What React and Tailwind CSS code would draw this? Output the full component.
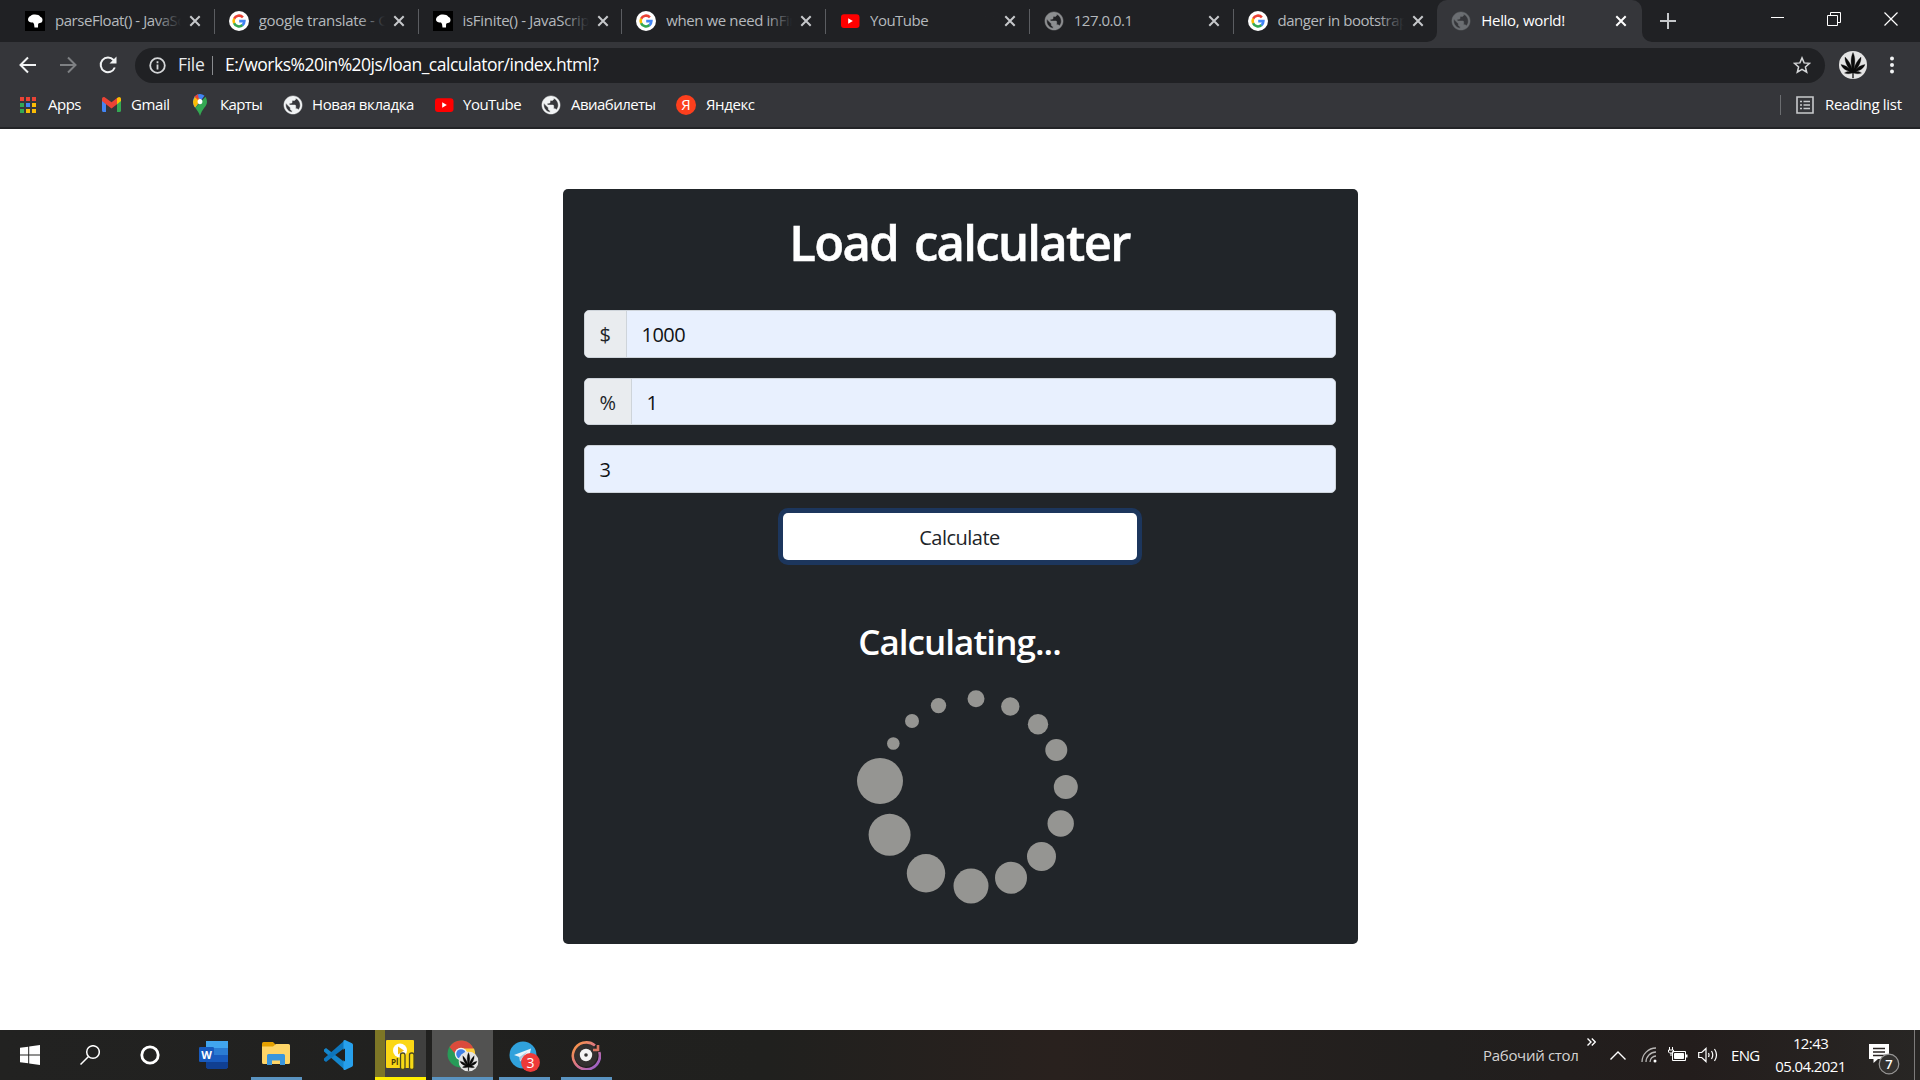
import React from "react";

const GoogleG = ({ s = 20 }) => (
  <svg width={s} height={s} viewBox="0 0 20 20">
    <circle cx="10" cy="10" r="10" fill="#fff" />
    <g fill="none" strokeWidth="2.6">
      <path d="M13.9 6.3A5.4 5.4 0 0 0 5.1 7.8" stroke="#ea4335" />
      <path d="M5.2 7.6a5.4 5.4 0 0 0 0 4.8" stroke="#fbbc05" />
      <path d="M5.1 12.2a5.4 5.4 0 0 0 8.5 1.9" stroke="#34a853" />
      <path d="M10.2 10.1h5.2a5.4 5.4 0 0 1-1.9 4.1" stroke="#4285f4" />
    </g>
  </svg>
);
const Hood = () => (
  <svg width="20" height="20" viewBox="0 0 20 20">
    <rect width="20" height="20" fill="#000" />
    <path d="M3 8.600C3 7 4 5.500 5.500 5 6.500 3.800 8 3.500 10 3.500c2.500 0 4.500.8 5.300 2.200 1.400.5 2.200 1.600 2.200 3.200 0 1.800-1 2.900-2.800 3.100-1 .2-1.700.6-1.600 1.600L13 16.500H9.500L9 13 8 11.500C7 11.300 5.500 11.600 4.700 11 3.600 10.600 3 9.700 3 8.600z" fill="#fff" />
  </svg>
);
const YT = () => (
  <svg width="20" height="20" viewBox="0 0 20 20">
    <rect x="1" y="3.200" width="18.500" height="13.800" rx="3" fill="#f00" />
    <path d="M8.200 7.300l4.600 2.700-4.600 2.700z" fill="#fff" />
  </svg>
);
const Globe = ({ c }) => (
  <svg width="20" height="20" viewBox="1 1 22 22">
    <path fill={c} stroke={c} strokeWidth=".5" d="M12 2C6.480 2 2 6.480 2 12s4.480 10 10 10 10-4.480 10-10S17.520 2 12 2zm-1 17.930c-3.950-.49-7-3.850-7-7.930 0-.62.08-1.210.21-1.790L9 15v1c0 1.100.9 2 2 2v1.930zm6.900-2.540c-.26-.81-1-1.390-1.900-1.390h-1v-3c0-.55-.45-1-1-1H8v-2h2c.55 0 1-.45 1-1V7h2c1.100 0 2-.9 2-2v-.41c2.930 1.190 5 4.060 5 7.410 0 2.080-.8 3.970-2.100 5.390z" />
  </svg>
);
const X = ({ c = "#c6c8cb" }) => (
  <svg width="12" height="12" viewBox="0 0 12 12" className="shrink-0">
    <path d="M1.300 1.300l9.400 9.400M10.700 1.300l-9.400 9.400" stroke={c} strokeWidth="2" />
  </svg>
);
const Leaf = ({ s }) => (
  <svg width={s} height={s} viewBox="0 0 28 28">
    <circle cx="14" cy="14" r="14" fill="#e4e4e4" />
    <path d="M14 1.500c2.500 5 2.200 11 .8 16.500 1.400-5 4-9 7.200-12 .3 5-2.500 10-5.500 13 2.500-3 5.500-5 9.500-5.500-1.500 4-5 6-9 7 2-.3 4 .2 5.500 1.500-2.500 1.200-5.500.8-8 .1v5h-1v-5c-2.500.7-5.500 1.100-8-.1 1.500-1.300 3.500-1.800 5.500-1.500-4-1-7.500-3-9-7 4 .5 7 2.500 9.500 5.500-3-3-5.800-8-5.500-13 3.200 3 5.800 7 7.200 12-1.400-5.500-1.700-11.500.8-16.500z" fill="#0a0a0a" stroke="#0a0a0a" strokeWidth=".3" />
  </svg>
);

const tabs = [
  [<Hood />, "parseFloat() - JavaScript", "tracking-[-0.45px]"],
  [<GoogleG />, "google translate - Google", "tracking-[-0.3px]"],
  [<Hood />, "isFinite() - JavaScript", "tracking-[-0.3px]"],
  [<GoogleG />, "when we need inFinite", "tracking-[-0.4px]"],
  [<YT />, "YouTube", "tracking-[-0.5px]"],
  [<Globe c="#8d8f91" />, "127.0.0.1", "tracking-[-0.5px]"],
  [<GoogleG />, "danger in bootstrap", "tracking-[-0.45px]"],
];

function Tabs() {
  return (
    <div className="flex h-[42px] bg-[#202124] pl-[11px]">
      {tabs.map(([icon, t, tr], i) => (
        <div key={i} className="flex w-[203.75px] shrink-0 items-center pl-[14px]">
          {icon}
          <div className="relative ml-[10px] h-[24px] w-[126px] overflow-hidden whitespace-nowrap">
            <span className={"block text-[15px] leading-[22px] text-[#b5b9bd] " + tr}>{t}</span>
            <span className="absolute inset-y-0 right-0 w-[26px] bg-gradient-to-r from-transparent to-[#202124]" />
          </div>
          <div className="ml-[8px] flex"><X /></div>
          {i < 6 && <div className="ml-auto h-[25px] w-px bg-[#5b5d61]" />}
        </div>
      ))}
      <div className="relative flex w-[205px] shrink-0 items-center rounded-t-[10px] bg-[#35363a] pl-[14px]">
        <svg className="absolute bottom-0 -left-[10px]" width="10" height="10"><path d="M10 0v10H0A10 10 0 0 0 10 0" fill="#35363a" /></svg>
        <svg className="absolute bottom-0 -right-[10px]" width="10" height="10"><path d="M0 0v10h10A10 10 0 0 1 0 0" fill="#35363a" /></svg>
        <Globe c="#6b6e72" />
        <span className="mb-[2px] ml-[10px] w-[126px] text-[15px] tracking-[-0.3px] text-white">Hello, world!</span>
        <div className="ml-[8px] flex"><X c="#fff" /></div>
      </div>
      <svg width="16" height="16" className="mt-[13px] ml-[18px]"><path d="M8 0v16M0 8h16" stroke="#c6c8cb" strokeWidth="2" /></svg>
      <div className="mt-[12px] mr-[22px] ml-auto flex gap-[43px]">
        <svg width="14" height="14"><path d="M1 5.500h13" stroke="#fff" /></svg>
        <svg width="14" height="14" fill="none" stroke="#fff"><path d="M.5 3.500h10v10H.5zM3.500 3.500V.5h10v10h-3" /></svg>
        <svg width="14" height="14"><path d="M.5.500l13 13M13.500.500l-13 13" stroke="#fff" strokeWidth="1.200" /></svg>
      </div>
    </div>
  );
}

function AddressBar() {
  return (
    <div className="flex h-[46px] items-center bg-[#35363a] pl-[19px]">
      <svg width="18" height="18" fill="none" stroke="#f1f3f4" strokeWidth="2"><path d="M17 9H2M9 1.500L1.500 9 9 16.500" /></svg>
      <svg width="18" height="18" className="ml-[22px]" fill="none" stroke="#7e8083" strokeWidth="2"><path d="M1 9h15M9 1.500L16.500 9 9 16.500" /></svg>
      <svg width="20" height="20" className="ml-[21px]" fill="none" stroke="#f1f3f4" strokeWidth="2"><path d="M16.800 12.500A7.300 7.300 0 1 1 15.500 5L17.500 7.500" /><path d="M18.500 1.500v7h-7z" fill="#f1f3f4" stroke="none" /></svg>
      <div className="ml-[17px] flex h-[35px] w-[1690px] items-center rounded-full bg-[#202124] pl-[14px]">
        <svg width="17" height="17" fill="none" stroke="#d4d6d8" strokeWidth="1.800"><circle cx="8.500" cy="8.500" r="7.300" /><path d="M8.500 7.500v5M8.500 4.300v1.900" /></svg>
        <span className="mb-[1px] ml-[12px] w-[26px] text-[17.500px] tracking-[-0.3px] text-[#e8eaed]">File</span>
        <span className="ml-[8px] h-[19px] w-px bg-[#8a8c8f]" />
        <span className="mb-[1px] ml-[12px] text-[17.500px] tracking-[-0.5px] whitespace-nowrap text-white">E:/works%20in%20js/loan_calculator/index.html?</span>
        <svg width="18" height="18" viewBox="0 0 18 18" className="mr-[14px] ml-auto"><path d="M9 1.900l2.100 5 5.400.4-4.100 3.600 1.300 5.300L9 13.400l-4.700 2.800 1.300-5.300L1.500 7.300l5.400-.4z" fill="none" stroke="#d4d6d8" strokeWidth="1.500" /></svg>
      </div>
      <div className="ml-[14px]"><Leaf s={28} /></div>
      <svg width="6" height="18" className="ml-[22px]" fill="#f1f3f4"><circle cx="3" cy="2.500" r="2" /><circle cx="3" cy="9" r="2" /><circle cx="3" cy="15.500" r="2" /></svg>
    </div>
  );
}

const apps = ["#ea4335", "#ea4335", "#ea4335", "#34a853", "#4285f4", "#fbbc05", "#34a853", "#fbbc05", "#fbbc05"];
const label = "text-[15px] text-white whitespace-nowrap ";
function Bookmarks() {
  return (
    <div className="flex h-[41px] items-center border-b-2 border-[#232427] bg-[#35363a] pb-[6px] pl-[20px]">
      <div className="grid grid-cols-3 gap-x-[2px] gap-y-[2px]">
        {apps.map((c, i) => <span key={i} className="h-[4px] w-[4px]" style={{ background: c }} />)}
      </div>
      <span className={label + "ml-[12px] w-[54px] tracking-[-0.5px]"}>Apps</span>
      <svg width="19" height="15" viewBox="0 0 19 15"><path d="M0 2v11.500c0 .8.500 1.500 1.500 1.500H4V5z" fill="#4285f4" /><path d="M19 2v11.500c0 .8-.5 1.500-1.500 1.500H15V5z" fill="#34a853" /><path d="M15 1l2-1c1.200 0 2 .8 2 2v2l-4 3.200z" fill="#fbbc05" /><path d="M0 2C0 .500 1.500-.5 3 .5L9.500 5.300 15 1v6.200l-5.500 4.300L4 7.200 0 4z" fill="#ea4335" /></svg>
      <span className={label + "ml-[10px] w-[62px] tracking-[-0.4px]"}>Gmail</span>
      <svg width="14" height="22" viewBox="0 0 14 20" preserveAspectRatio="none"><path d="M7 0a7 7 0 0 0-7 7c0 2 1 4 2.200 5.500L11.500 1.700A7 7 0 0 0 7 0z" fill="#4285f4" /><path d="M2 2L0 6.500c0 2.500 1 4.500 2.200 6L8 5z" fill="#fbbc05" /><path d="M1.500 2.600A7 7 0 0 1 5 .3L6 6 4.500 5z" fill="#ea4335" /><path d="M12.500 2.600C13.500 4 14 5.500 14 7c0 4.500-5 6-7 13-.8-3-2.800-5-4.800-7.500z" fill="#34a853" /><circle cx="7" cy="6.900" r="2.400" fill="#fff" /></svg>
      <span className={label + "ml-[13px] w-[63px] tracking-[-0.6px]"}>Карты</span>
      <Globe c="#f1f3f4" />
      <span className={label + "ml-[9px] w-[122px] tracking-[-0.4px]"}>Новая вкладка</span>
      <YT />
      <span className={label + "ml-[9px] w-[78px] tracking-[-0.5px]"}>YouTube</span>
      <Globe c="#f1f3f4" />
      <span className={label + "ml-[10px] w-[105px] tracking-[-0.55px]"}>Авиабилеты</span>
      <span className="flex h-[20px] w-[20px] items-center justify-center rounded-full bg-[#fc3f1d] text-[15px] leading-none text-white">Я</span>
      <span className={label + "ml-[10px] tracking-[-0.4px]"}>Яндекс</span>
      <span className="ml-auto h-[20px] w-px bg-[#6b6d70]" />
      <svg width="18" height="18" className="ml-[15px]" fill="none" stroke="#c8cacc" strokeWidth="1.600"><path d="M1 1h16v16H1z" /><path d="M4 5.500h2M4 9h2M4 12.500h2M7.500 5.500H14M7.500 9H14M7.500 12.500H14" /></svg>
      <span className={label + "mr-[17px] ml-[11px] w-[78px] tracking-[-0.3px]"}>Reading list</span>
    </div>
  );
}

const dots = [
  [976, 698.7, 8.5], [1010.3, 706.5, 9.2], [1038, 724.2, 10.2], [1056.3, 750, 11], [1065.800, 787, 12], [1060.700, 823.5, 13.2],
  [1041.500, 856.500, 14.500], [1011, 877.800, 16], [971, 886, 17.500], [926, 873.300, 19.200], [889.600, 834.800, 21], [880, 781, 23],
  [893.300, 743.500, 6.300], [912, 721, 7], [938.500, 705.600, 7.700],
];

function Field({ sign, w, value, h, mt }) {
  return (
    <div className={"flex overflow-hidden rounded-[5px] border border-[#ced4da] bg-[#e8f0fe] text-[20px] text-[#101214] " + h + " " + mt}>
      {sign && <span className={"flex items-center border-r border-[#ced4da] bg-[#e9ecef] pt-[2px] pl-[15px] text-[#212529] " + w}>{sign}</span>}
      <span className="flex items-center pt-[2px] pl-[15px] tracking-[-0.5px]">{value}</span>
    </div>
  );
}

function Card() {
  return (
    <div className="mx-auto mt-[60px] flex h-[755px] w-[795px] flex-col rounded-[5px] bg-[#212529] pt-[22px] pr-[22px] pl-[21px]">
      <h1 className="h-[60px] text-center text-[49px] leading-[62px] font-semibold tracking-[-1.700px] text-white [-webkit-text-stroke:0.5px_white] [word-spacing:5px]">Load calculater</h1>
      <Field sign="$" w="w-[42px]" value="1000" h="h-[48px]" mt="mt-[39px]" />
      <Field sign="%" w="w-[47px]" value="1" h="h-[47px]" mt="mt-[20px]" />
      <Field value="3" h="h-[48px]" mt="mt-[20px]" />
      <button className="mx-auto mt-[20px] h-[47px] w-[354px] rounded-[5px] bg-white pt-[2px] text-[20px] tracking-[-0.5px] text-[#212529] shadow-[0_0_0_5px_#1c365d]">Calculate</button>
      <h3 className="mt-[61px] h-[42px] text-center text-[35px] leading-[42px] font-semibold tracking-[-0.95px] text-white">Calculating...</h3>
      <svg className="mx-auto mt-[20px]" width="240" height="240" viewBox="840 683 240 240" fill="#959592">
        {dots.map(([x, y, r], i) => <circle key={i} cx={x} cy={y} r={r} />)}
      </svg>
    </div>
  );
}

const Slot = ({ className = "", bar = "", children }) => (
  <div className={"relative flex h-[50px] shrink-0 items-center justify-center " + className}>
    {children}
    {bar && <span className={"absolute bottom-0 left-0 h-[3px] w-full " + bar} />}
  </div>
);

function Taskbar() {
  return (
    <div className="flex h-[50px] bg-[linear-gradient(90deg,#222221,#20201e_40%,#29211e_55%,#211f1e_75%,#231d1c_88%,#282624)] text-white">
      <Slot className="w-[60px]"><svg width="20" height="20" viewBox="0 0 20 20" fill="#fff"><path d="M0 2.800L8.200 1.700v7.800H0zM9.200 1.500L20 0v9.500H9.200zM0 10.500h8.200v7.800L0 17.200zM9.200 10.500H20V20L9.200 18.500z" /></svg></Slot>
      <Slot className="w-[60px]"><svg width="20" height="20" fill="none" stroke="#fff" strokeWidth="1.500"><circle cx="13" cy="7" r="6.300" /><path d="M8.500 11.500L.5 19.500" /></svg></Slot>
      <Slot className="w-[60px]"><svg width="20" height="20" fill="none" stroke="#fff" strokeWidth="2.800"><circle cx="10" cy="10" r="8.200" /></svg></Slot>
      <Slot className="w-[67px]">
        <svg width="29" height="28" viewBox="0 0 29 28"><path d="M7 0h22v7H7z" fill="#41a5ee" /><path d="M7 7h22v7H7z" fill="#2b7cd3" /><path d="M7 14h22v7H7z" fill="#185abd" /><path d="M7 21h22v5.500L27.500 28H8.500L7 26.500z" fill="#103f91" /><rect y="6" width="15" height="15" rx="1.300" fill="#185abd" /><text x="7.500" y="17.500" textAnchor="middle" fontSize="11" fontWeight="700" fill="#fff">W</text></svg>
      </Slot>
      <Slot className="ml-[4px] w-[51px]" bar="bg-[#5a93c0]">
        <svg width="28" height="24" viewBox="0 0 28 24" className="mr-[2px] mb-[2px]"><path d="M0 1.500Q0 0 1.500 0H11l3 3-3 3H0z" fill="#e6a100" /><path d="M0 4.500h11l3-2.500h12.500Q28 2 28 3.500v17q0 1.500-1.500 1.500h-25Q0 22 0 20.500z" fill="#ffd567" /><path d="M5 23V13.500Q5 12 6.500 12h15q1.500 0 1.500 1.500V23h-5v-4.500H10V23z" fill="#3a96dd" /></svg>
        <span className="absolute right-0 bottom-0 h-[3px] w-[11px] bg-[#3f6a8c]" />
      </Slot>
      <Slot className="ml-[5px] w-[62px]">
        <svg width="30" height="30" viewBox="0 0 30 30"><path d="M1 9.500l2-1.500L22 22.500V30L1 11.500z" fill="#1486cc" /><path d="M1 20.500l2 1.500L22 7.500V0L1 18.500z" fill="#0d76bd" /><path d="M22 0l7 3.200q1 .6 1 1.800v20q0 1.200-1 1.800L22 30q-1 0-1.500-.5V.500Q21 0 22 0z" fill="#27a0ec" /><path d="M22 8.500v13L13.500 15z" fill="#20201e" /></svg>
      </Slot>
      <Slot className="ml-[6px] w-[51px] bg-[#40403f]" bar="bg-[#ffee00]">
        <span className="absolute top-0 left-0 h-[47px] w-[10px] bg-[#7d7626]" />
        <svg width="30" height="32" viewBox="0 0 30 32" className="relative"><rect x="0" y="1" width="28" height="28" rx="1" fill="#fbd715" /><circle cx="14" cy="11.500" r="7" fill="#fff" /><path d="M12 7.500l6 4-6 4z" fill="#f2bd10" /><text x="5" y="26" fontSize="8" fontWeight="700" fill="#4a3d08">Pl</text><rect x="14.500" y="14" width="4.500" height="16.500" rx="2" fill="#f5d916" stroke="#4b4720" strokeWidth="1.300" /><rect x="23.500" y="14" width="4.500" height="16.500" rx="2" fill="#f5d916" stroke="#4b4720" strokeWidth="1.300" /></svg>
      </Slot>
      <Slot className="ml-[6px] w-[61px] bg-[#525251]" bar="bg-[#5a93c0]">
        <svg width="32" height="32" viewBox="0 0 32 32" className="mt-[2px]"><circle cx="14" cy="14" r="13.500" fill="#279b58" /><path d="M2.500 7a13.500 13.500 0 0 1 24.500 3H14a5 5 0 0 0-4.800 5z" fill="#db4b3c" /><path d="M14 8.500h13A13.500 13.500 0 0 1 14 27.500l5.500-10z" fill="#fbcc3b" /><circle cx="14" cy="14" r="6.200" fill="#f3f3f3" /><circle cx="14" cy="14" r="4.800" fill="#3f80e5" /><g transform="translate(11.500 11.500)"><Leaf s={20} /></g></svg>
      </Slot>
      <Slot className="ml-[6px] w-[51px]" bar="bg-[#5a93c0]">
        <svg width="31" height="31" viewBox="0 0 31 31" className="mt-[2px]"><circle cx="14" cy="14" r="13.500" fill="#30a1dc" /><path d="M5 14L22 7.500l-3 14-5-3.500-3 2.500-.5-4.500z" fill="#e9f4fb" /><path d="M10.500 16l8-5.500-6 7-1.500 3z" fill="#a9cbe2" /><circle cx="21.500" cy="21.500" r="9.400" fill="#ee3a39" /><text x="21.500" y="26.500" textAnchor="middle" fontSize="14" fill="#fff">3</text></svg>
      </Slot>
      <Slot className="ml-[11px] w-[51px]" bar="bg-[#5a93c0]">
        <svg width="30" height="30" viewBox="0 0 30 30" fill="none" className="mr-[1px]"><defs><linearGradient id="ring" x1="0" y1="0" x2="1" y2="1"><stop offset="0" stopColor="#ff9a3c" /><stop offset=".5" stopColor="#d9748a" /><stop offset="1" stopColor="#8a5bd8" /></linearGradient></defs><circle cx="15" cy="15" r="11.500" fill="#33302f" /><path d="M24 5.500A13.500 13.500 0 1 0 28.300 12" stroke="url(#ring)" strokeWidth="2.600" /><path d="M27 5v5h-5" stroke="#d9745f" strokeWidth="2.600" /><circle cx="15" cy="15" r="6.200" fill="#f4f4f4" /><circle cx="15" cy="15" r="1.800" fill="#333" /></svg>
      </Slot>
      <div className="ml-auto flex items-center">
        <span className="w-[92px] text-[15px] tracking-[-0.3px] whitespace-nowrap text-[#d5d3d2]">Рабочий стол</span>
        <svg width="9" height="8" className="mb-[26px] ml-[12px]" fill="none" stroke="#fff" strokeWidth="1.400"><path d="M.5.500L4 4 .5 7.500M4.800.500L8.300 4 4.800 7.500" /></svg>
        <svg width="16" height="9" className="ml-[14px]" fill="none" stroke="#fff" strokeWidth="1.400"><path d="M.5 8.500L8 1l7.500 7.500" /></svg>
        <svg width="16" height="16" className="ml-[15px]" fill="none" stroke="#b9b7b6" strokeWidth="1.300"><path d="M1 15A14 14 0 0 1 15 1M5 15A10 10 0 0 1 15 5M9 15a6 6 0 0 1 6-6" /><circle cx="14" cy="14" r="1.500" fill="#fff" stroke="none" /></svg>
        <svg width="20" height="15" className="mb-[2px] ml-[11px]" fill="none" stroke="#fff"><path d="M4.500 4.500h13v9h-13z" /><path d="M6.500 6.500h9v5h-9z" fill="#fff" /><path d="M18 7.500h1.500v3H18z" fill="#fff" stroke="none" /><path d="M1.500 0v3M4.500 0v3M.5 3h5v2l-1 1h-3l-1-1zM3 6v3" /></svg>
        <svg width="21" height="16" className="ml-[10px]" fill="none" stroke="#fff" strokeWidth="1.200"><path d="M.7 5.500h3L8 1.500v13l-4.300-4h-3z" /><path d="M10.500 6q1 2 0 4M13.500 4q2.500 4 0 8M16.500 2q4 6 0 12" /></svg>
        <span className="ml-[12px] w-[30px] text-[15px] tracking-[-0.7px]">ENG</span>
        <div className="ml-[14px] flex w-[71px] flex-col items-center text-[15px] leading-[23px] tracking-[-0.6px] whitespace-nowrap"><span>12:43</span><span>05.04.2021</span></div>
        <svg width="31" height="32" viewBox="0 0 31 32" className="mt-[8px] ml-[23px]"><path d="M0 1h20v15H9l-4.500 4v-4H0z" fill="#fff" /><path d="M4 5.500h12M4 9h12M4 12.500h12" stroke="#2a2423" strokeWidth="1.300" /><circle cx="20" cy="21" r="9.800" fill="#343230" stroke="#989796" strokeWidth="1.200" /><text x="20" y="26" textAnchor="middle" fontSize="13" fontWeight="600" fill="#fff">7</text></svg>
        <span className="ml-[14px] h-[50px] w-px bg-[#7d7b7a]" />
        <span className="w-[5px]" />
      </div>
    </div>
  );
}

export default function App() {
  return (
    <div className="flex h-[1080px] w-[1920px] flex-col overflow-hidden bg-white font-['Open_Sans','Noto_Sans',sans-serif]">
      <Tabs />
      <AddressBar />
      <Bookmarks />
      <main className="h-[901px]"><Card /></main>
      <Taskbar />
    </div>
  );
}
